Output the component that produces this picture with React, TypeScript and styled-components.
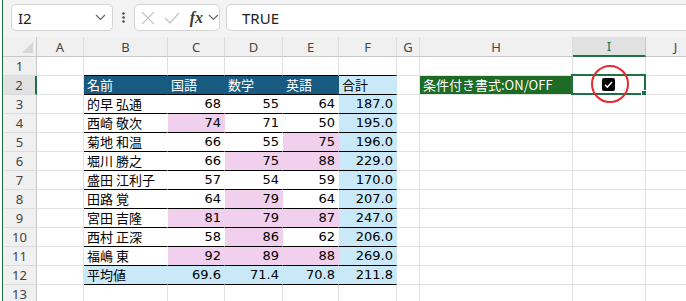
import React from "react";
import styled, { createGlobalStyle } from "styled-components";

const GlobalStyle = createGlobalStyle`
  html, body {
    margin: 0;
    padding: 0;
    background: #fff;
  }
  body {
    width: 686px;
    height: 301px;
    overflow: hidden;
    font-family: "Noto Sans", "Noto Sans CJK JP", sans-serif;
  }
`;

const GREEN = "#1e7145";
const GRID = "#e1e1e1";

const Window = styled.div`
  position: relative;
  width: 684px;
  height: 301px;
  margin-left: 2px;
  box-sizing: border-box;
  border-left: 1px solid ${GREEN};
  background: #f3f3f3;
  overflow: hidden;
`;

const FormulaBar = styled.div`
  height: 37px;
  box-sizing: border-box;
  display: flex;
  align-items: flex-start;
  padding: 4px 0 0 8px;
`;

const NameBox = styled.div`
  width: 102px;
  height: 27px;
  box-sizing: border-box;
  border: 1px solid #d4d4d4;
  border-radius: 5px;
  background: #fff;
  display: flex;
  align-items: center;
  justify-content: space-between;
  padding: 0 6px 0 6px;
  font-size: 15px;
  color: #222;
`;

const Dots = styled.div`
  width: 21px;
  height: 27px;
  display: flex;
  align-items: center;
  justify-content: center;
`;

const FxBox = styled.div`
  width: 86px;
  height: 27px;
  box-sizing: border-box;
  border: 1px solid #d4d4d4;
  border-radius: 5px;
  background: #fff;
  display: flex;
  align-items: center;
  gap: 9px;
  padding-left: 6px;
`;

const FxLabel = styled.span`
  font-family: "Liberation Serif", serif;
  font-style: italic;
  font-weight: bold;
  font-size: 16px;
  color: #3a3a3a;
  margin-left: 1px;
  margin-right: -4px;
`;

const FormulaInput = styled.div`
  flex: 1;
  height: 27px;
  margin-left: 6px;
  margin-right: -12px;
  box-sizing: border-box;
  border: 1px solid #d4d4d4;
  border-radius: 5px;
  background: #fff;
  display: flex;
  align-items: center;
  padding-left: 15px;
  font-size: 15px;
  color: #222;
`;

const Sheet = styled.div`
  display: grid;
  grid-template-columns: 34px 47px 84px 57px 58px 56px 58px 23px 153px 73px 60px;
  grid-template-rows: 20px;
  grid-auto-rows: 19px;
  background: #fff;
`;

const Corner = styled.div`
  box-sizing: border-box;
  background: #f0f0f0;
  border-right: 1px solid #c8c8c8;
  border-bottom: 1px solid #c8c8c8;
  display: flex;
  align-items: flex-end;
  justify-content: flex-end;
  padding: 0 3px 3px 0;
`;

const ColHead = styled.div<{ $active?: boolean }>`
  box-sizing: border-box;
  background: ${(p) => (p.$active ? "#e1e1e1" : "#f0f0f0")};
  border-right: 1px solid ${(p) => (p.$active ? "#c8c8c8" : "#dcdcdc")};
  border-bottom: ${(p) => (p.$active ? `2px solid ${GREEN}` : "1px solid #c8c8c8")};
  display: flex;
  align-items: center;
  justify-content: center;
  font-size: 13px;
  color: ${(p) => (p.$active ? GREEN : "#444")};
`;

const RowHead = styled.div<{ $active?: boolean }>`
  box-sizing: border-box;
  background: ${(p) => (p.$active ? "#e1e1e1" : "#f0f0f0")};
  border-right: ${(p) => (p.$active ? `2px solid ${GREEN}` : "1px solid #c8c8c8")};
  border-bottom: 1px solid #dcdcdc;
  display: flex;
  align-items: center;
  justify-content: center;
  font-size: 13px;
  color: #444;
`;

const Cell = styled.div<{ $bg?: string; $rule?: boolean; $num?: boolean; $light?: boolean }>`
  position: relative;
  box-sizing: border-box;
  background: ${(p) => p.$bg ?? "#fff"};
  border-right: 1px solid ${(p) => (p.$bg ? "transparent" : GRID)};
  border-bottom: 1px solid ${(p) => (p.$rule ? "#000" : GRID)};
  display: flex;
  align-items: center;
  justify-content: ${(p) => (p.$num ? "flex-end" : "flex-start")};
  padding: 0 3px 1px 3px;
  font-family: "DejaVu Sans", "Noto Sans CJK JP", sans-serif;
  font-size: 13px;
  color: ${(p) => (p.$light ? "#fff" : "#000")};
  white-space: nowrap;
`;

const Label = styled.span`
  font-family: "Noto Sans CJK JP", sans-serif;
  font-size: 13px;
`;

const ToggleCell = styled(Cell)`
  justify-content: center;
  padding-right: 5px;
`;

const Selection = styled.div`
  position: absolute;
  left: -2px;
  top: -2px;
  right: -1px;
  bottom: -1px;
  border: 2px solid ${GREEN};
  pointer-events: none;
`;

const FillHandle = styled.div`
  position: absolute;
  right: -4px;
  bottom: -4px;
  width: 5px;
  height: 5px;
  background: ${GREEN};
  border: 1px solid #fff;
`;

const Annotation = styled.div`
  position: absolute;
  left: 588px;
  top: 65px;
  width: 38px;
  height: 38px;
  box-sizing: border-box;
  border: 2px solid #e8262b;
  border-radius: 50%;
  pointer-events: none;
`;

const HEAD_BG = "#195b80";
const TOTAL_BG = "#c9e9f9";
const PINK = "#f0d0ec";

interface Score {
  name: string;
  values: string[];
  pink: boolean[];
  total: string;
}

const scores: Score[] = [
  { name: "的早 弘通", values: ["68", "55", "64"], pink: [false, false, false], total: "187.0" },
  { name: "西崎 敬次", values: ["74", "71", "50"], pink: [true, false, false], total: "195.0" },
  { name: "菊地 和温", values: ["66", "55", "75"], pink: [false, false, true], total: "196.0" },
  { name: "堀川 勝之", values: ["66", "75", "88"], pink: [false, true, true], total: "229.0" },
  { name: "盛田 江利子", values: ["57", "54", "59"], pink: [false, false, false], total: "170.0" },
  { name: "田路 覚", values: ["64", "79", "64"], pink: [false, true, false], total: "207.0" },
  { name: "宮田 吉隆", values: ["81", "79", "87"], pink: [true, true, true], total: "247.0" },
  { name: "西村 正深", values: ["58", "86", "62"], pink: [false, true, false], total: "206.0" },
  { name: "福嶋 東", values: ["92", "89", "88"], pink: [true, true, true], total: "269.0" },
];

const columns = ["A", "B", "C", "D", "E", "F", "G", "H", "I", "J"];

const Chevron = () => (
  <svg width="11" height="7" viewBox="0 0 11 7">
    <polyline points="1,1 5.5,5.5 10,1" fill="none" stroke="#666" strokeWidth="1.2" />
  </svg>
);

const Blank = ({ n }: { n: number }) => (
  <>
    {Array.from({ length: n }, (_, i) => (
      <Cell key={i} />
    ))}
  </>
);

const App: React.FC = () => {
  return (
    <>
      <GlobalStyle />
      <Window>
        <FormulaBar>
          <NameBox>
            <span>I2</span>
            <Chevron />
          </NameBox>
          <Dots>
            <svg width="3" height="11" viewBox="0 0 3 11">
              <circle cx="1.5" cy="1.5" r="1.2" fill="#444" />
              <circle cx="1.5" cy="5.5" r="1.2" fill="#444" />
              <circle cx="1.5" cy="9.5" r="1.2" fill="#444" />
            </svg>
          </Dots>
          <FxBox>
            <svg width="14" height="14" viewBox="0 0 14 14">
              <path d="M1 1 L13 13 M13 1 L1 13" stroke="#bdbdbd" strokeWidth="1.2" />
            </svg>
            <svg width="16" height="12" viewBox="0 0 16 12">
              <polyline points="1,6 6,11 15,1" fill="none" stroke="#bdbdbd" strokeWidth="1.2" />
            </svg>
            <FxLabel>fx</FxLabel>
            <Chevron />
          </FxBox>
          <FormulaInput>TRUE</FormulaInput>
        </FormulaBar>

        <Sheet>
          <Corner>
            <svg width="11" height="11" viewBox="0 0 11 11">
              <polygon points="11,0 11,11 0,11" fill="#d6d6d6" />
            </svg>
          </Corner>
          {columns.map((c) => (
            <ColHead key={c} $active={c === "I"}>
              {c}
            </ColHead>
          ))}

          <RowHead>1</RowHead>
          <Cell />
          <Cell $rule />
          <Cell $rule />
          <Cell $rule />
          <Cell $rule />
          <Cell $rule />
          <Blank n={4} />

          <RowHead $active>2</RowHead>
          <Cell />
          <Cell $bg={HEAD_BG} $rule $light>
            <Label>名前</Label>
          </Cell>
          <Cell $bg={HEAD_BG} $rule $light>
            <Label>国語</Label>
          </Cell>
          <Cell $bg={HEAD_BG} $rule $light>
            <Label>数学</Label>
          </Cell>
          <Cell $bg={HEAD_BG} $rule $light>
            <Label>英語</Label>
          </Cell>
          <Cell $bg={TOTAL_BG} $rule>
            <Label>合計</Label>
          </Cell>
          <Cell />
          <Cell $bg="#1d6b24" $light>
            <Label>条件付き書式:ON/OFF</Label>
          </Cell>
          <ToggleCell>
            <svg width="13" height="13" viewBox="0 0 13 13">
              <rect x="0" y="0" width="13" height="13" rx="2" fill="#000" />
              <polyline points="3,6.8 5.4,9.2 10,4" fill="none" stroke="#fff" strokeWidth="1.6" />
            </svg>
            <Selection>
              <FillHandle />
            </Selection>
          </ToggleCell>
          <Cell />

          {scores.map((s, i) => (
            <React.Fragment key={s.name}>
              <RowHead>{i + 3}</RowHead>
              <Cell />
              <Cell $bg="#fff" $rule>
                <Label>{s.name}</Label>
              </Cell>
              {s.values.map((v, j) => (
                <Cell key={j} $bg={s.pink[j] ? PINK : "#fff"} $rule $num>
                  {v}
                </Cell>
              ))}
              <Cell $bg={TOTAL_BG} $rule $num>
                {s.total}
              </Cell>
              <Blank n={4} />
            </React.Fragment>
          ))}

          <RowHead>12</RowHead>
          <Cell />
          <Cell $bg={TOTAL_BG} $rule>
            <Label>平均値</Label>
          </Cell>
          <Cell $bg={TOTAL_BG} $rule $num>
            69.6
          </Cell>
          <Cell $bg={TOTAL_BG} $rule $num>
            71.4
          </Cell>
          <Cell $bg={TOTAL_BG} $rule $num>
            70.8
          </Cell>
          <Cell $bg={TOTAL_BG} $rule $num>
            211.8
          </Cell>
          <Blank n={4} />

          <RowHead>13</RowHead>
          <Blank n={10} />
        </Sheet>
        <Annotation />
      </Window>
    </>
  );
};

export default App;
